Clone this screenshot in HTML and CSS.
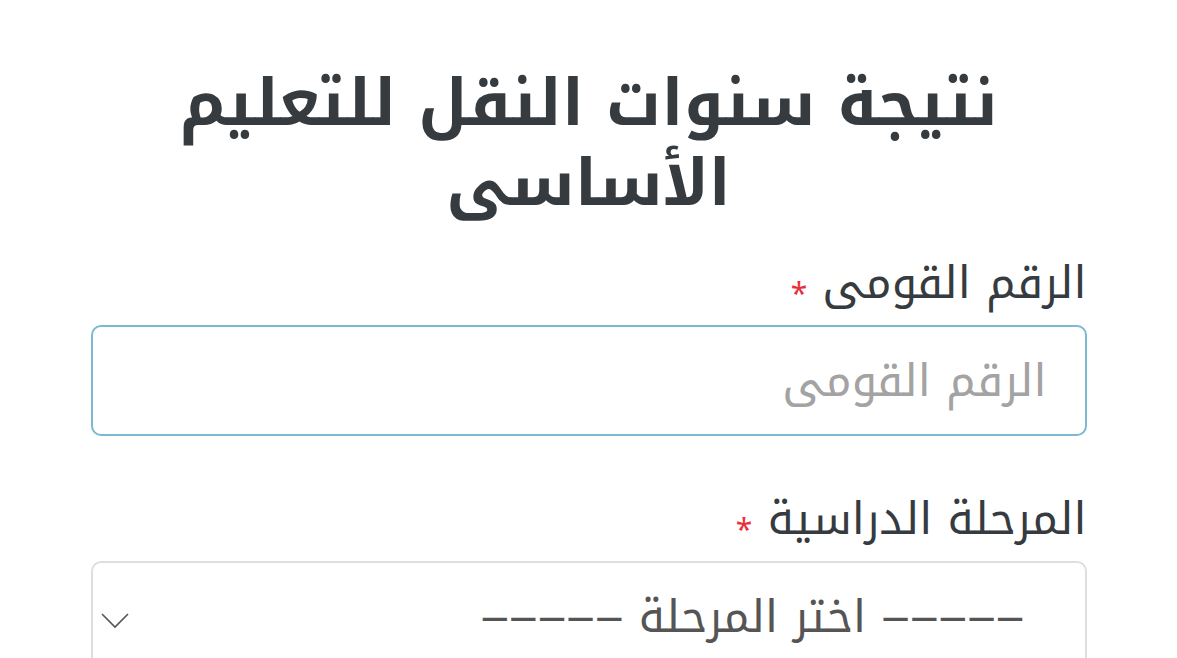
FILE: index.html
```html
<!DOCTYPE html>
<html lang="ar" dir="rtl">
<head>
    <meta charset="UTF-8">
    <meta name="viewport" content="width=device-width, initial-scale=1.0">
    <title>نتيجة سنوات النقل</title>
    <link rel="stylesheet" href="styles.css">
</head>
<body>
    <div class="container">
        <h1 class="title">نتيجة سنوات النقل للتعليم الأساسى</h1>

        <form class="result-form">
            <div class="field">
                <label for="nationalId">الرقم القومى <span class="req">*</span></label>
                <input type="text" id="nationalId" placeholder="الرقم القومى">
            </div>

            <div class="field">
                <label for="stage">المرحلة الدراسية <span class="req">*</span></label>
                <div class="select-box">
                    <select id="stage">
                        <option>‒‒‒‒‒ اختر المرحلة ‒‒‒‒‒</option>
                    </select>
                    <svg class="chevron" width="28" height="16" viewBox="0 0 28 16">
                        <path d="M1 1 L14 14 L27 1" fill="none" stroke="#555" stroke-width="1.6"/>
                    </svg>
                </div>
            </div>
        </form>
    </div>
</body>
</html>
```

FILE: styles.css
```css
body {
    font-family: "Noto Kufi Arabic", "DejaVu Sans", sans-serif;
    background-color: #fff;
    color: #363b3f;
    margin: 0;
    padding: 0;
}

.container {
    width: 996px;
    margin: 0 auto;
    padding-top: 64px;
}

.title {
    text-align: center;
    font-size: 64px;
    font-weight: bold;
    line-height: 80px;
    color: #363b3f;
    margin: 0 20px 31px;
}

.field {
    margin-bottom: 55px;
}

.field label {
    display: block;
    font-size: 45px;
    line-height: 56px;
    color: #363b3f;
    margin-bottom: 14px;
}

.req {
    color: #e8303a;
    font-size: 30px;
    line-height: 1;
    vertical-align: -6px;
}

input {
    width: 100%;
    box-sizing: border-box;
    height: 111px;
    border: 2px solid #7db8d1;
    border-radius: 10px;
    padding: 0 38px;
    font-family: inherit;
    font-size: 45px;
    color: #333;
    outline: none;
}

input::placeholder {
    color: #a3a3a3;
}

.select-box {
    position: relative;
}

select {
    width: 100%;
    box-sizing: border-box;
    height: 111px;
    border: 2px solid #dedede;
    border-radius: 10px;
    padding: 0 60px;
    font-family: inherit;
    font-size: 45px;
    color: #555;
    background: #fff;
    appearance: none;
    outline: none;
}

.chevron {
    position: absolute;
    left: 10px;
    top: 52px;
}
```
